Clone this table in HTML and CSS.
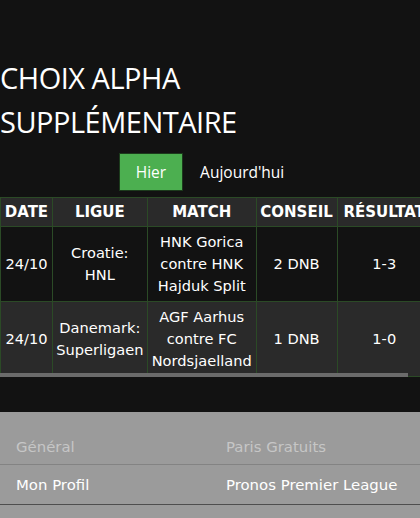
FILE: index.html
```html
<!DOCTYPE html>
<html lang="fr">
<head>
<meta charset="utf-8">
<link rel="stylesheet" href="styles.css">
</head>
<body>
<main class="page">
  <h1 class="title">CHOIX ALPHA SUPPLÉMENTAIRE</h1>
  <div class="tabs">
    <button class="tab tab-active">Hier</button>
    <button class="tab">Aujourd'hui</button>
  </div>
  <div class="table-wrap">
    <table class="picks">
      <thead>
        <tr>
          <th class="c-date">DATE</th>
          <th class="c-league">LIGUE</th>
          <th class="c-match">MATCH</th>
          <th class="c-tip">CONSEIL</th>
          <th class="c-res">RÉSULTAT</th>
        </tr>
      </thead>
      <tbody>
        <tr>
          <td>24/10</td>
          <td>Croatie: HNL</td>
          <td>HNK Gorica contre HNK Hajduk Split</td>
          <td>2 DNB</td>
          <td>1-3</td>
        </tr>
        <tr class="alt">
          <td>24/10</td>
          <td>Danemark: Superligaen</td>
          <td>AGF Aarhus contre FC Nordsjaelland</td>
          <td>1 DNB</td>
          <td>1-0</td>
        </tr>
      </tbody>
    </table>
    <div class="scroll-thumb"></div>
  </div>
</main>
<footer class="footer">
  <div class="foot-row foot-head">
    <span class="foot-cell">Général</span>
    <span class="foot-cell">Paris Gratuits</span>
  </div>
  <div class="foot-row foot-links">
    <span class="foot-cell">Mon Profil</span>
    <span class="foot-cell">Pronos Premier League</span>
  </div>
</footer>
</body>
</html>
```

FILE: styles.css
```css
* { box-sizing: border-box; }
html, body { margin: 0; padding: 0; }
body {
  background: #121212;
  color: #fff;
  font-family: "Open Sans", sans-serif;
  width: 420px;
  height: 518px;
  overflow: hidden;
}
.page {
  padding-top: 56px;
  height: 412px;
}
.title {
  margin: 0;
  font-weight: 400;
  font-size: 29px;
  line-height: 44px;
  width: 260px;
  letter-spacing: -0.5px;
}
.tabs {
  display: flex;
  justify-content: center;
  margin-top: 9px;
}
.tab {
  font-family: "Open Sans", sans-serif;
  font-size: 15.5px;
  color: #fff;
  background: transparent;
  border: 1px solid transparent;
  padding: 0 16px;
  height: 38px;
}
.tab-active {
  background: #4caf50;
  border-color: #1c3a1c;
}
.table-wrap {
  margin-top: 6px;
  overflow: hidden;
  width: 420px;
}
.picks {
  border-collapse: collapse;
  font-family: "DejaVu Sans", sans-serif;
  font-size: 14.6px;
  line-height: 22px;
  text-align: center;
  width: 432px;
}
.picks th, .picks td {
  border: 1px solid #2b4a26;
  padding: 3px 3px;
}
.picks th {
  background: #2a2a2a;
  font-weight: 700;
  font-size: 15px;
}
.picks td { padding: 4px 3px; }
.picks .alt td { background: #2a2a2a; }
.c-date { width: 52px; }
.c-league { width: 95px; }
.c-match { width: 109px; }
.c-tip { width: 81px; }
.c-res { width: 95px; }
.scroll-thumb {
  width: 408px;
  height: 4px;
  margin-top: -4px;
  position: relative;
  background: #6b6b6b;
}
.footer {
  background: #9b9b9b;
  font-family: "DejaVu Sans", sans-serif;
  font-size: 14.9px;
  height: 106px;
  padding-top: 26px;
}
.foot-row {
  display: grid;
  grid-template-columns: 210px 210px;
}
.foot-cell { padding-left: 16px; }
.foot-head {
  color: #c6c6c6;
  height: 27px;
  border-bottom: 1px solid #838383;
}
.foot-links {
  color: #fff;
  height: 40px;
  padding-top: 11px;
  border-bottom: 1px solid #4e4e4e;
}
```
